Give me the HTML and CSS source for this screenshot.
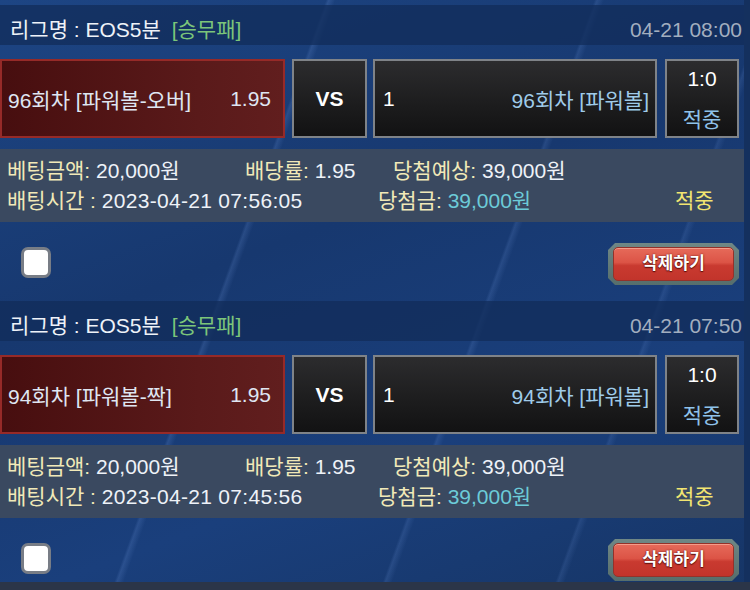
FILE: index.html
```html
<!DOCTYPE html>
<html lang="ko">
<head>
<meta charset="utf-8">
<link rel="stylesheet" href="styles.css">
</head>
<body>
<div class="page">
  <div class="card">
    <div class="head">
      <div class="league">리그명 : EOS5분 <span class="type">[승무패]</span></div>
      <div class="date">04-21 08:00</div>
    </div>
    <div class="match">
      <div class="box home"><span>96회차 [파워볼-오버]</span><span>1.95</span></div>
      <div class="box vs">VS</div>
      <div class="box away"><span class="num">1</span><span class="team">96회차 [파워볼]</span></div>
      <div class="box score"><span>1:0</span><span class="res">적중</span></div>
    </div>
    <div class="info">
      <div class="row">
        <div class="c1"><span class="lb">베팅금액:</span> 20,000원</div>
        <div class="c2"><span class="lb">배당률:</span> 1.95</div>
        <div class="c3"><span class="lb">당첨예상:</span> 39,000원</div>
      </div>
      <div class="row">
        <div class="d1"><span class="lb">배팅시간 :</span> <span class="time">2023-04-21 07:56:05</span></div>
        <div class="d2"><span class="lb">당첨금:</span> <span class="win">39,000원</span></div>
        <div class="hit">적중</div>
      </div>
    </div>
    <div class="actions">
      <div class="check"></div>
      <div class="del"><div class="del-in">삭제하기</div></div>
    </div>
  </div>
  <div class="card">
    <div class="head">
      <div class="league">리그명 : EOS5분 <span class="type">[승무패]</span></div>
      <div class="date">04-21 07:50</div>
    </div>
    <div class="match">
      <div class="box home"><span>94회차 [파워볼-짝]</span><span>1.95</span></div>
      <div class="box vs">VS</div>
      <div class="box away"><span class="num">1</span><span class="team">94회차 [파워볼]</span></div>
      <div class="box score"><span>1:0</span><span class="res">적중</span></div>
    </div>
    <div class="info">
      <div class="row">
        <div class="c1"><span class="lb">베팅금액:</span> 20,000원</div>
        <div class="c2"><span class="lb">배당률:</span> 1.95</div>
        <div class="c3"><span class="lb">당첨예상:</span> 39,000원</div>
      </div>
      <div class="row">
        <div class="d1"><span class="lb">배팅시간 :</span> <span class="time">2023-04-21 07:45:56</span></div>
        <div class="d2"><span class="lb">당첨금:</span> <span class="win">39,000원</span></div>
        <div class="hit">적중</div>
      </div>
    </div>
    <div class="actions">
      <div class="check"></div>
      <div class="del"><div class="del-in">삭제하기</div></div>
    </div>
  </div>
  <div class="footer"></div>
</div>
</body>
</html>
```
FILE: styles.css
```css
* { box-sizing: border-box; }
html, body { margin: 0; padding: 0; }
body {
  width: 750px;
  height: 590px;
  overflow: hidden;
  background: #14305e;
  font-family: "Liberation Sans", "Noto Sans CJK KR", sans-serif;
  font-size: 21px;
  color: #eef2f8;
}
.page {
  width: 744px;
  height: 590px;
  background:
    linear-gradient(110deg, transparent 0 34%, rgba(120,160,230,0.18) 34.3%, transparent 35%,
      transparent 62%, rgba(120,160,230,0.16) 62.3%, transparent 63%,
      transparent 80%, rgba(120,160,230,0.14) 80.3%, transparent 81%),
    linear-gradient(160deg, #1d4584 0%, #17386f 40%, #1a3f7c 70%, #163566 100%);
}
.card { height: 296px; padding-top: 5px; }
.card + .card { height: 286px; }
.head {
  height: 40px;
  padding: 10px 2px 0 10px;
  background: rgba(18, 44, 90, 0.75);
  display: flex;
  justify-content: space-between;
  line-height: 30px;
}
.league { color: #eef2f8; }
.type { color: #7cc57a; margin-left: 5px; }
.date { color: #a2aebf; }
.match {
  margin-top: 14px;
  height: 79px;
  display: flex;
  gap: 7px;
}
.box {
  height: 79px;
  border: 2px solid #7f8388;
  background: linear-gradient(180deg, #2c2c2e 0%, #1c1c1d 60%, #121213 100%);
  display: flex;
  align-items: center;
}
.home {
  width: 285px;
  border-color: #962a28;
  background: linear-gradient(90deg, #470e0f 0%, #5a1a1a 70%, #611e1e 100%);
  justify-content: space-between;
  padding: 0 12px 0 6px;
  color: #dfe6f2;
}
.vs {
  width: 75px;
  justify-content: center;
  font-weight: bold;
  font-size: 21px;
  color: #ffffff;
}
.away {
  width: 284px;
  margin-left: -1px;
  justify-content: space-between;
  padding: 0 6px 0 8px;
}
.away .num { color: #ffffff; }
.away .team { color: #9fcbe9; }
.score {
  width: 74px;
  margin-left: 1px;
  flex-direction: column;
  justify-content: flex-start;
  padding-top: 3px;
  gap: 11px;
  line-height: 30px;
  color: #ffffff;
}
.score .res { color: #8fc2ea; }
.info {
  margin-top: 11px;
  height: 73px;
  background: #3a4960;
  padding: 7px 0 0 7px;
  line-height: 30px;
}
.row { display: flex; white-space: nowrap; }
.c1 { width: 238px; }
.c2 { width: 148px; }
.d1 { width: 371px; }
.d2 { width: 297px; }
.time { letter-spacing: 0.3px; }
.lb { color: #f1e9b8; }
.win { color: #6ccbd8; }
.hit { color: #f2e571; }
.actions {
  margin-top: 21px;
  height: 42px;
  display: flex;
  justify-content: space-between;
  align-items: center;
  padding: 0 5px 0 21px;
}
.check {
  width: 30px;
  height: 31px;
  margin-top: -3px;
  background: #ffffff;
  border: 3px solid #787d86;
  border-radius: 7px;
}
.del {
  width: 131px;
  height: 42px;
  padding: 4px 5px;
  background: linear-gradient(180deg, #6f8785 0%, #566e6c 100%);
  clip-path: polygon(7px 0, 124px 0, 131px 7px, 131px 35px, 124px 42px, 7px 42px, 0 35px, 0 7px);
}
.del-in {
  height: 34px;
  border-radius: 5px;
  border: 1px solid #93322a;
  background: linear-gradient(180deg, #e66a5a 0%, #dc5446 45%, #c93a30 55%, #c2342b 100%);
  box-shadow: inset 0 1px 0 rgba(255,190,170,0.6);
  color: #ffffff;
  font-weight: bold;
  font-size: 17px;
  line-height: 32px;
  text-align: center;
  text-shadow: 0 1px 1px #5a0e0a, 0 0 2px #6a1410;
}
.footer {
  height: 8px;
  background: #2b3548;
  width: 750px;
}
```
